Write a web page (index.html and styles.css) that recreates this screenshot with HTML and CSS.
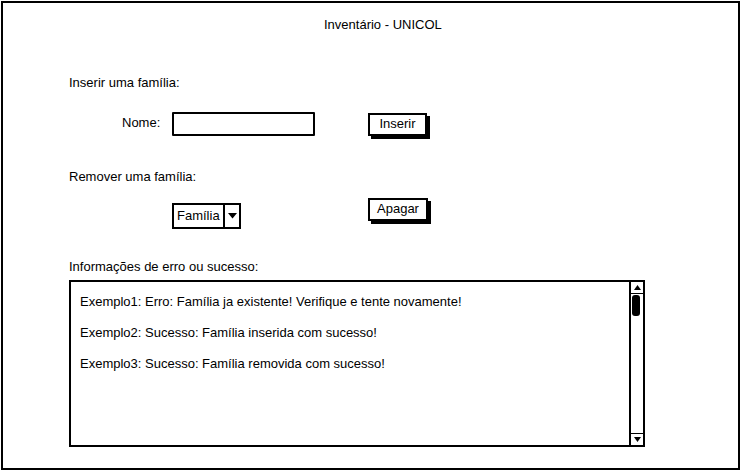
FILE: index.html
```html
<!DOCTYPE html>
<html lang="pt">
<head>
<meta charset="utf-8">
<title>Inventário - UNICOL</title>
<link rel="stylesheet" href="styles.css">
</head>
<body>
<div class="frame">
  <div class="title">Inventário - UNICOL</div>

  <div class="label label-insert">Inserir uma família:</div>
  <div class="row row-insert">
    <span class="field-label">Nome:</span>
    <div class="input"></div>
    <div class="button btn-insert">Inserir</div>
  </div>

  <div class="label label-remove">Remover uma família:</div>
  <div class="row row-remove">
    <div class="select">
      <span class="select-text">Família</span>
      <span class="select-arrow"><svg width="9" height="6" viewBox="0 0 9 6"><path d="M0 0 H9 L4.5 5.5 Z" fill="#000"/></svg></span>
    </div>
    <div class="button btn-delete">Apagar</div>
  </div>

  <div class="label label-info">Informações de erro ou sucesso:</div>
  <div class="textarea">
    <div class="messages">
      <p>Exemplo1: Erro: Família ja existente! Verifique e tente novamente!</p>
      <p>Exemplo2: Sucesso: Família inserida com sucesso!</p>
      <p>Exemplo3: Sucesso: Família removida com sucesso!</p>
    </div>
    <div class="scrollbar">
      <div class="sb-btn"><svg width="7" height="5" viewBox="0 0 7 5"><path d="M0 5 H7 L3.5 0 Z" fill="#000"/></svg></div>
      <div class="sb-track"><div class="sb-thumb"></div></div>
      <div class="sb-btn sb-down"><svg width="7" height="5" viewBox="0 0 7 5"><path d="M0 0 H7 L3.5 5 Z" fill="#000"/></svg></div>
    </div>
  </div>
</div>
</body>
</html>
```

FILE: styles.css
```css
* { box-sizing: border-box; }
html, body { margin: 0; padding: 0; background: #fff; }
body {
  font-family: "Liberation Sans", Arial, sans-serif;
  font-size: 13px;
  color: #000;
}
.frame {
  margin: 1px 0 0 1px;
  width: 739px;
  height: 469px;
  border: 2px solid #000;
  padding: 0 0 0 66px;
  display: flex;
  flex-direction: column;
  align-items: flex-start;
}
.title {
  margin-top: 14px;
  margin-left: 255px;
  line-height: 16px;
}
.label { line-height: 16px; }
.label-insert { margin-top: 42px; }
.row { display: flex; align-items: flex-start; }
.row-insert { margin-top: 21px; }
.field-label {
  width: 103px;
  padding-left: 53px;
  line-height: 16px;
  margin-top: 3px;
}
.input {
  width: 143px;
  height: 24px;
  border: 2px solid #000;
  border-radius: 1px;
}
.button {
  border: 2px solid #000;
  box-shadow: 3px 3px 0 #000;
  background: #fff;
  line-height: 18px;
  text-align: center;
}
.btn-insert {
  margin-left: 53px;
  margin-top: 1px;
  width: 59px;
  height: 23px;
}
.label-remove { margin-top: 33px; }
.row-remove { margin-top: 12px; }
.select {
  margin-left: 103px;
  margin-top: 6px;
  width: 69px;
  height: 26px;
  border: 2px solid #000;
  display: flex;
}
.select-text {
  flex: 1;
  line-height: 22px;
  padding-left: 3px;
}
.select-arrow {
  width: 16px;
  border-left: 2px solid #000;
  display: flex;
  align-items: center;
  justify-content: center;
}
.btn-delete {
  margin-left: 127px;
  margin-top: 1px;
  width: 60px;
  height: 23px;
}
.label-info { margin-top: 30px; }
.textarea {
  margin-top: 5px;
  width: 576px;
  height: 167px;
  border: 2px solid #000;
  display: flex;
}
.messages {
  flex: 1;
  padding: 12px 0 0 9px;
}
.messages p {
  margin: 0 0 15px 0;
  line-height: 16px;
}
.scrollbar {
  width: 14px;
  border-left: 2px solid #000;
  display: flex;
  flex-direction: column;
}
.sb-btn {
  height: 11px;
  display: flex;
  align-items: center;
  justify-content: center;
}
.sb-track {
  flex: 1;
  border-top: 1px solid #000;
  border-bottom: 1px solid #000;
  padding: 1px 0 0 1px;
}
.sb-thumb {
  width: 8px;
  height: 21px;
  background: #000;
  border-radius: 3px;
}
```
